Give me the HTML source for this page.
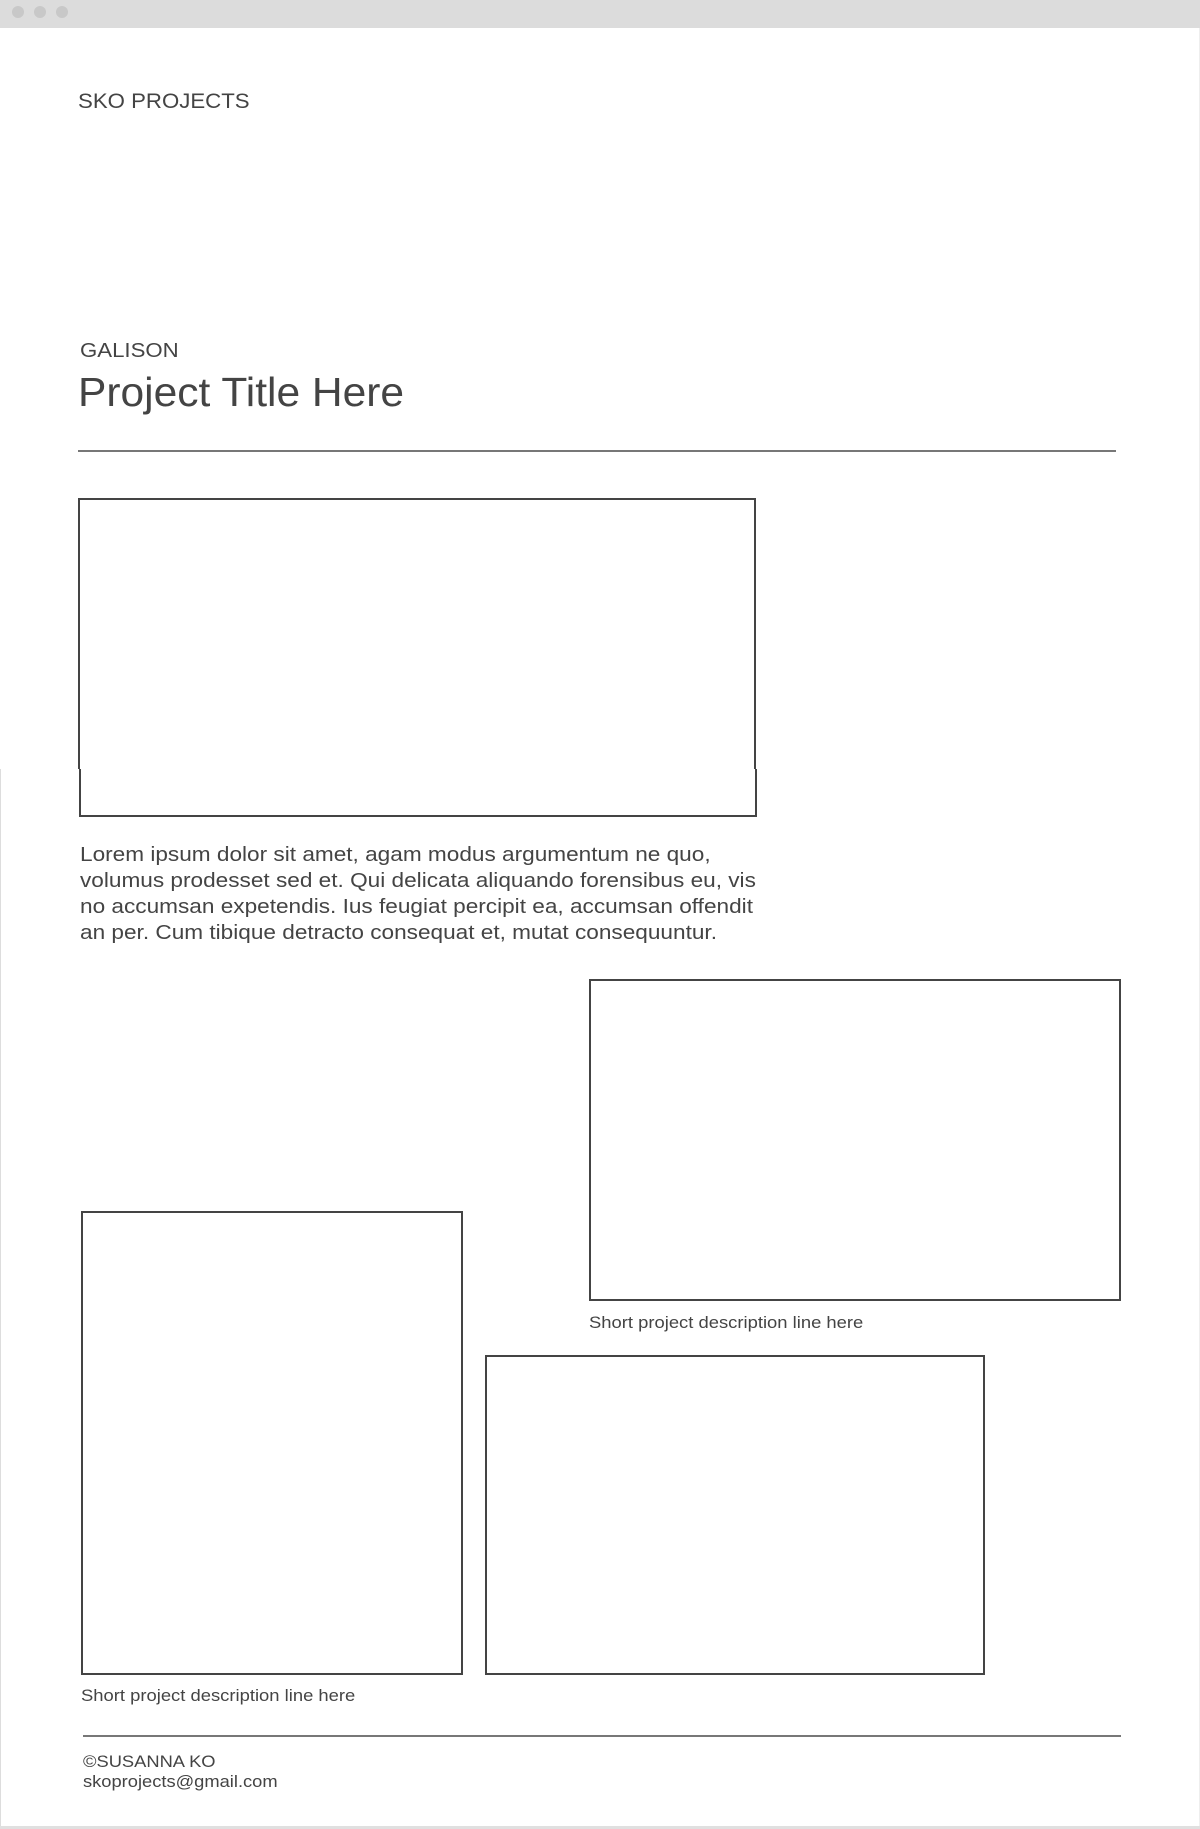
<!DOCTYPE html>
<html><head><meta charset="utf-8"><style>
*{margin:0;padding:0;box-sizing:border-box}
body{width:1200px;height:1829px;background:#fff;position:relative;overflow:hidden;font-family:"Liberation Sans",Arial,sans-serif;color:#444}
.a{position:absolute}
.bx{position:absolute;border:2px solid #444}
.t{position:absolute;white-space:nowrap;line-height:1;transform-origin:0 0}
</style></head><body>
<div class="a" style="left:0;top:0;width:1200px;height:28px;background:#dcdcdc"></div>
<div class="a" style="left:12px;top:6px;width:12px;height:12px;border-radius:50%;background:#c8c8c8"></div>
<div class="a" style="left:34px;top:6px;width:12px;height:12px;border-radius:50%;background:#c8c8c8"></div>
<div class="a" style="left:56px;top:6px;width:12px;height:12px;border-radius:50%;background:#c8c8c8"></div>
<div class="a" style="left:0;top:769px;width:1px;height:1060px;background:#ddd"></div>
<div class="a" style="left:1199px;top:28px;width:1px;height:1801px;background:#eee"></div>
<div class="a" style="left:0;top:1826px;width:1200px;height:3px;background:#e0e0e0"></div>

<div class="t" style="left:78px;top:91px;font-size:21px;transform:scaleX(1.058)">SKO PROJECTS</div>
<div class="t" style="left:80px;top:341px;font-size:20px;transform:scaleX(1.11)">GALISON</div>
<div class="t" style="left:78px;top:372px;font-size:41px;transform:scaleX(1.037)">Project Title Here</div>
<div class="a" style="left:78px;top:450px;width:1038px;height:2px;background:#777"></div>

<div class="a" style="left:78px;top:498px;width:678px;height:271px;border:2px solid #444;border-bottom:none"></div>
<div class="a" style="left:79px;top:769px;width:678px;height:48px;border:2px solid #444;border-top:none"></div>

<div class="t" style="left:80px;top:842px;font-size:20px;line-height:26px;transform:scaleX(1.13)">Lorem ipsum dolor sit amet, agam modus argumentum ne quo,<br>volumus prodesset sed et. Qui delicata aliquando forensibus eu, vis<br>no accumsan expetendis. Ius feugiat percipit ea, accumsan offendit<br>an per. Cum tibique detracto consequat et, mutat consequuntur.</div>

<div class="bx" style="left:589px;top:979px;width:532px;height:322px"></div>
<div class="t" style="left:589px;top:1314px;font-size:17px;transform:scaleX(1.083)">Short project description line here</div>

<div class="bx" style="left:81px;top:1211px;width:382px;height:464px"></div>
<div class="bx" style="left:485px;top:1355px;width:500px;height:320px"></div>
<div class="t" style="left:81px;top:1687px;font-size:17px;transform:scaleX(1.083)">Short project description line here</div>

<div class="a" style="left:83px;top:1735px;width:1038px;height:2px;background:#777"></div>
<div class="t" style="left:83px;top:1753px;font-size:17px;transform:scaleX(1.077)">©SUSANNA KO</div>
<div class="t" style="left:83px;top:1773px;font-size:17px;transform:scaleX(1.077)">skoprojects@gmail.com</div>
</body></html>
